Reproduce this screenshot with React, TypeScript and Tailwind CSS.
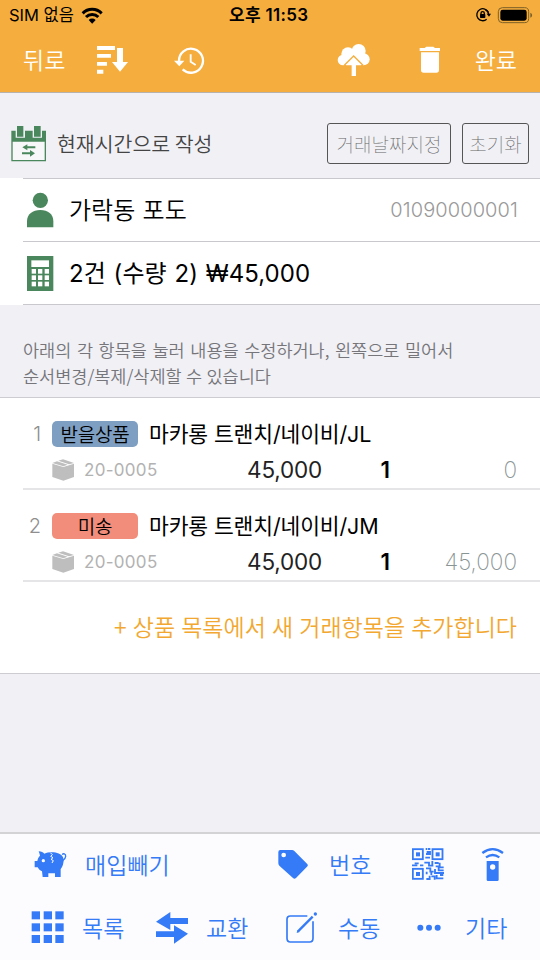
import React from "react";

type IconProps = { box: string; size: string; children: React.ReactNode };

function Icon({ box, size, children }: IconProps) {
  return (
    <svg viewBox={box} className={`block shrink-0 ${size}`} fill="currentColor" aria-hidden="true">
      {children}
    </svg>
  );
}

const latin = "font-['Inter','Noto_Sans_CJK_KR',sans-serif]";

function WifiIcon() {
  return (
    <Icon box="242 18 66 51" size="w-[22px] h-[17px]">
      <g fill="none" stroke="black" strokeWidth="9">
        <path d="M247 37a40 40 0 0 1 57 0" />
        <path d="M257 48a26 26 0 0 1 37 0" />
      </g>
      <path d="M265 57a15 15 0 0 1 21 0l-10.500 11z" />
    </Icon>
  );
}

function LockIcon() {
  return (
    <Icon box="615 21 48 48" size="w-[16px] h-[16px]">
      <g fill="none" stroke="black" strokeWidth="4">
        <path d="M655 37a18 18 0 1 0-5 21" />
        <path d="M646 29a18 18 0 0 1 10 14" />
        <path d="M633 44v-4a5 5 0 0 1 10 0v4" />
      </g>
      <rect x="630" y="42" width="16" height="12" rx="2" />
      <path d="M650 41h13l-6 9z" />
    </Icon>
  );
}

function BatteryIcon() {
  return (
    <Icon box="681 15 108 54" size="w-[36px] h-[18px]">
      <rect x="685" y="20" width="91" height="45" rx="12" fill="none" stroke="#7d6028" strokeWidth="3" />
      <rect x="691" y="26" width="79" height="33" rx="7" />
      <path d="M781 35c7 3 7 12 0 15z" fill="#7d6028" />
    </Icon>
  );
}

function SortIcon() {
  return (
    <Icon box="288 135 96 90" size="w-[32px] h-[30px]">
      <path d="M291 138h54v12h-54zM291 162h42v11h-42zM291 186h30v11h-30zM291 209h19v12h-19z" />
      <path d="M351 144h18v42h15l-24 29-24-29h15z" />
    </Icon>
  );
}

function HistoryIcon() {
  return (
    <Icon box="522 135 96 87" size="w-[32px] h-[29px]">
      <path d="M537 180a36 36 0 1 1 11 25" fill="none" stroke="white" strokeWidth="7" />
      <path d="M522 179h31l-15 17z" />
      <path d="M572 160v22l15 10" fill="none" stroke="white" strokeWidth="5.500" />
    </Icon>
  );
}

function CloudIcon() {
  return (
    <Icon box="201 129 99 102" size="w-[33px] h-[34px]">
      <circle cx="219" cy="180" r="16" />
      <circle cx="234" cy="162" r="20" />
      <circle cx="266" cy="153" r="21" />
      <circle cx="281" cy="178" r="18" />
      <path d="M218 164h64v31h-64z" />
      <path d="M223 196l28-28 28 28" fill="none" stroke="#f5ae3d" strokeWidth="4" />
      <path d="M226 197h50v5h-50z" fill="#f5ae3d" />
      <path d="M251 173l23 23h-16v32h-13v-32h-17z" />
    </Icon>
  );
}

function TrashIcon() {
  return (
    <Icon box="447 138 66 84" size="w-[22px] h-[28px]">
      <path d="M449 144h15l5-4h21l5 4h15v9h-61z" />
      <path d="M453 157h54v53a8 8 0 0 1-8 8h-38a8 8 0 0 1-8-8z" />
    </Icon>
  );
}

function CalendarIcon() {
  return (
    <Icon box="33 48 108 108" size="w-[36px] h-[36px]">
      <path d="M34 62h104v92H34z" />
      <path d="M38 95h96v55H38z" fill="#f7f7fa" />
      <path d="M47 50h28v33H47zM98 50h28v33H98z" fill="#f0f0f5" />
      <path d="M51 48h19v32H51zM102 48h20v32h-20z" />
      <path d="M67 112l15-9v6h24v6H82v6zM105 130l-15-10v7H66v6h24v7z" />
    </Icon>
  );
}

function PersonIcon() {
  return (
    <Icon box="81 246 81 108" size="w-[27px] h-[36px]">
      <circle cx="121" cy="271" r="23" />
      <path d="M81 352v-18c0-22 17-34 40-34s39 12 39 34v18z" />
    </Icon>
  );
}

function CalculatorIcon() {
  const cols = [95, 114, 134];
  const rows = [477, 496, 515];
  return (
    <Icon box="81 438 81 105" size="w-[27px] h-[35px]">
      <path d="M81 438h79v105H81z" />
      <g fill="white">
        <path d="M94 451h53v20H94z" />
        {rows.map((y) => cols.map((x) => <rect key={`${x}-${y}`} x={x} y={y} width="13" height="14" />))}
      </g>
    </Icon>
  );
}

function BoxIcon() {
  return (
    <Icon box="156 387 69 66" size="w-[23px] h-[22px]">
      <path d="M157 401l33 10 32-10v40l-32 11-33-11z" />
      <path d="M157 399l14-5 32 10-13 5zM175 392l14-4 33 11-15 4z" />
    </Icon>
  );
}

function PigIcon() {
  return (
    <Icon box="102 78 99 84" size="w-[33px] h-[28px]">
      <path d="M116 82c8 0 14 3 17 7 7-3 14-4 22-4 16 0 29 5 34 15 2 6 3 10 1 16-1 8-4 14-8 19v24h-17v-11h-20v11h-17l-2-17c-6-2-10-6-13-12h-9v-19h8c1-7 4-12 8-16-1-4-2-9-4-13z" />
      <path d="M187 92c2-5 11-3 10 5-1 7-4 10-8 12" fill="none" stroke="currentColor" strokeWidth="4" />
      <circle cx="130" cy="110" r="5" fill="#fcfcfe" />
      <path d="M151 86l6 6-5 5 7 4-6 5 7 4-4 7" fill="none" stroke="#fcfcfe" strokeWidth="3" />
    </Icon>
  );
}

function TagIcon() {
  return (
    <Icon box="24 72 90 90" size="w-[30px] h-[30px]">
      <path d="M25 81q0-6 6-6h35q4 0 7 3l38 38q5 5 0 9l-33 34q-5 5-9 0L28 122q-3-3-3-7z" />
      <circle cx="41" cy="90" r="7" fill="#fcfcfe" />
    </Icon>
  );
}

function QrIcon() {
  const finders = [
    [426, 70],
    [485, 70],
    [426, 129],
  ];
  return (
    <Icon box="426 69 96 96" size="w-[32px] h-[32px]">
      {finders.map(([x, y]) => (
        <g key={`${x}-${y}`}>
          <rect x={x + 2.5} y={y + 2.5} width="30" height="30" fill="none" stroke="currentColor" strokeWidth="5.500" />
          <rect x={x + 12} y={y + 12} width="12" height="12" />
        </g>
      ))}
      <path
        fill="none"
        stroke="currentColor"
        strokeWidth="5.500"
        d="M467 72h5M474 72h7M470 81h10v6h-12M466 98h14M426 121h16M434 115h12M450 121h10M463 113h14v9h13M487 108v14M494 114h12M509 113v14h12M497 124h9v12h15M468 130h13v10h10M484 140v10M495 132v12h13M508 144h14M470 140v8M469 162h10v-10M484 154h10v10M500 150v10h20M510 150h10"
      />
    </Icon>
  );
}

function RemoteIcon() {
  return (
    <Icon box="633 63 69 105" size="w-[23px] h-[35px]">
      <g fill="none" stroke="currentColor" strokeWidth="7">
        <path d="M637 81q31-23 62 0" />
        <path d="M648 94q20-14 40 0" />
      </g>
      <path d="M650 105h36v56q0 4-4 4h-28q-4 0-4-4z" />
      <circle cx="668" cy="123" r="8" fill="#fcfcfe" />
    </Icon>
  );
}

function GridIcon() {
  const steps = [0, 36, 71];
  return (
    <Icon box="93 260 99 99" size="w-[33px] h-[33px]">
      {steps.map((y) => steps.map((x) => <rect key={`${x}-${y}`} x={95 + x} y={261 + y} width="25" height="24" />))}
    </Icon>
  );
}

function ExchangeIcon() {
  return (
    <Icon box="468 258 96 99" size="w-[32px] h-[33px]">
      <path d="M468 290l43-29v18h53v18h-53v18z" />
      <path d="M564 326l-42-25v18h-54v17h54v20z" />
    </Icon>
  );
}

function ComposeIcon() {
  return (
    <Icon box="48 261 93 93" size="w-[31px] h-[31px]">
      <path d="M112 273H61q-10 0-10 10v57q0 11 10 11h58q10 0 10-11v-51" fill="none" stroke="currentColor" strokeWidth="5" />
      <path d="M84 319l44-44" stroke="currentColor" strokeWidth="7" />
      <path d="M80 324l2-9 7 6z" />
      <circle cx="136" cy="267" r="5" />
    </Icon>
  );
}

function DotsIcon() {
  return (
    <Icon box="444 297 72 21" size="w-[24px] h-[7px]">
      <circle cx="454" cy="308" r="9" />
      <circle cx="480" cy="308" r="9" />
      <circle cx="506" cy="308" r="9" />
    </Icon>
  );
}

type Item = { no: number; badge: string; tone: string; name: string; code: string; price: string; qty: number; total: string };

const items: Item[] = [
  { no: 1, badge: "받을상품", tone: "bg-[#7f9fc2]", name: "마카롱 트랜치/네이비/JL", code: "20-0005", price: "45,000", qty: 1, total: "0" },
  { no: 2, badge: "미송", tone: "bg-[#f18d7a]", name: "마카롱 트랜치/네이비/JM", code: "20-0005", price: "45,000", qty: 1, total: "45,000" },
];

function ItemRow({ item }: { item: Item }) {
  return (
    <div className="ml-[23px] flex h-[92px] flex-col border-b-2 border-[#e5e5e7] pt-[22px]">
      <div className="flex h-[28px] items-center">
        <span className={`w-[18px] text-right text-[20px] font-light text-[#8e8e8e] ${latin}`}>{item.no}</span>
        <span className={`ml-[11px] flex h-[26px] w-[86px] items-center justify-center rounded-[5px] pb-[2px] text-[19px] font-[350] tracking-[-0.2px] ${item.tone}`}>
          {item.badge}
        </span>
        <span className={`ml-[11px] pt-[1px] text-[21.500px] tracking-[-0.12px] ${latin}`}>{item.name}</span>
      </div>
      <div className={`flex h-[40px] items-center pt-[4px] ${latin}`}>
        <span className="ml-[29px] text-[#bebebe]">
          <BoxIcon />
        </span>
        <span className="ml-[9px] w-[100px] text-[17px] tracking-[0.3px] text-[#b2b2b2]">{item.code}</span>
        <span className="w-[138px] text-right text-[22.500px] tracking-[-0.2px] text-[#222]">{item.price}</span>
        <span className="w-[68px] text-right text-[22.500px] font-semibold">{item.qty}</span>
        <span className="ml-auto mr-[23px] text-[22.500px] font-extralight text-[#899494]">{item.total}</span>
      </div>
    </div>
  );
}

export default function App() {
  return (
    <div className="flex h-[960px] w-[540px] flex-col overflow-hidden whitespace-nowrap bg-[#f0f0f5] font-['Noto_Sans_CJK_KR',sans-serif] leading-none text-black">
      <header className="h-[93px] shrink-0 border-b border-[#b7b2ac] bg-[#f5ae3d]">
        <div className="flex h-[30px] items-center">
          <span className={`ml-[9px] w-[66px] text-[16.500px] ${latin}`}>SIM 없음</span>
          <span className="ml-[6px]">
            <WifiIcon />
          </span>
          <span className={`ml-[126px] w-[91px] text-[17px] font-semibold tracking-[0.3px] ${latin}`}>오후 11:53</span>
          <span className="ml-auto">
            <LockIcon />
          </span>
          <span className="ml-[6px] mr-[7px]">
            <BatteryIcon />
          </span>
        </div>
        <div className="flex h-[60px] items-center text-[23px] font-[350] text-white">
          <span className="ml-[23px] w-[73px] pb-[1px]">뒤로</span>
          <SortIcon />
          <span className="ml-[46px]">
            <HistoryIcon />
          </span>
          <span className="ml-[131px]">
            <CloudIcon />
          </span>
          <span className="ml-[49px]">
            <TrashIcon />
          </span>
          <span className="ml-auto mr-[23px] pb-[1px]">완료</span>
        </div>
      </header>

      <section className="flex h-[85px] shrink-0 items-center pt-[16px]">
        <span className="ml-[11px] text-[#4a875d]">
          <CalendarIcon />
        </span>
        <span className="ml-[10px] text-[20.500px] font-[350] text-[#444]">현재시간으로 작성</span>
        <button className="ml-auto flex h-[41px] w-[124px] items-center justify-center rounded-[3px] border-[1.500px] border-[#555] pb-[1px] text-[19px] font-thin text-[#666]">거래날짜지정</button>
        <button className="ml-[11px] mr-[11px] flex h-[41px] w-[67px] items-center justify-center rounded-[3px] border-[1.500px] border-[#555] pb-[1px] text-[19px] font-thin text-[#666]">초기화</button>
      </section>

      <section className="shrink-0 bg-white">
        <div className="ml-[23px] flex h-[63px] items-center border-t border-[#c9c9cd]">
          <span className="ml-[4px] text-[#4a875d]">
            <PersonIcon />
          </span>
          <span className="ml-[15px] pb-[2px] text-[24px] font-[350] [word-spacing:2px]">가락동 포도</span>
          <span className={`ml-auto mr-[22px] text-[20px] font-light tracking-[0.1px] text-[#999] ${latin}`}>01090000001</span>
        </div>
        <div className="ml-[23px] flex h-[64px] items-center border-y border-[#c9c9cd]">
          <span className="ml-[4px] text-[#4a875d]">
            <CalculatorIcon />
          </span>
          <span className={`ml-[15px] pt-[2px] text-[24px] tracking-[0.05px] [word-spacing:1px] ${latin}`}>2건 (수량 2) ₩45,000</span>
        </div>
      </section>

      <p className="h-[93px] shrink-0 border-b border-[#cdcdd1] pl-[23px] pt-[32px] text-[17.500px] font-[350] leading-[26px] text-[#75757a]">
        <span className="[word-spacing:1.7px]">아래의 각 항목을 눌러 내용을 수정하거나, 왼쪽으로 밀어서</span>
        <br />
        <span className="[word-spacing:0.5px]">순서변경/복제/삭제할 수 있습니다</span>
      </p>

      <section className="shrink-0 bg-white">
        {items.map((item) => (
          <ItemRow key={item.no} item={item} />
        ))}
        <div className="flex h-[92px] items-center justify-end border-b border-[#cdcdd1] pb-[2px] pr-[23px] text-[23px] font-[350] text-[#f2a830] [word-spacing:1px]">
          + 상품 목록에서 새 거래항목을 추가합니다
        </div>
      </section>

      <footer className="mt-auto h-[128px] shrink-0 border-t-2 border-[#d3d3d6] bg-[#fcfcfe] text-[23px] font-[350] text-[#357af6]">
        <div className="flex h-[60px] items-center">
          <span className="ml-[34px]">
            <PigIcon />
          </span>
          <span className="ml-[18px] w-[193px]">매입빼기</span>
          <TagIcon />
          <span className="ml-[21px] w-[83px]">번호</span>
          <QrIcon />
          <span className="ml-[37px]">
            <RemoteIcon />
          </span>
        </div>
        <div className="flex h-[66px] items-center">
          <span className="ml-[31px]">
            <GridIcon />
          </span>
          <span className="ml-[18px] w-[74px]">목록</span>
          <ExchangeIcon />
          <span className="ml-[18px] w-[80px]">교환</span>
          <ComposeIcon />
          <span className="ml-[21px] w-[79px]">수동</span>
          <DotsIcon />
          <span className="ml-[24px]">기타</span>
        </div>
      </footer>
    </div>
  );
}
